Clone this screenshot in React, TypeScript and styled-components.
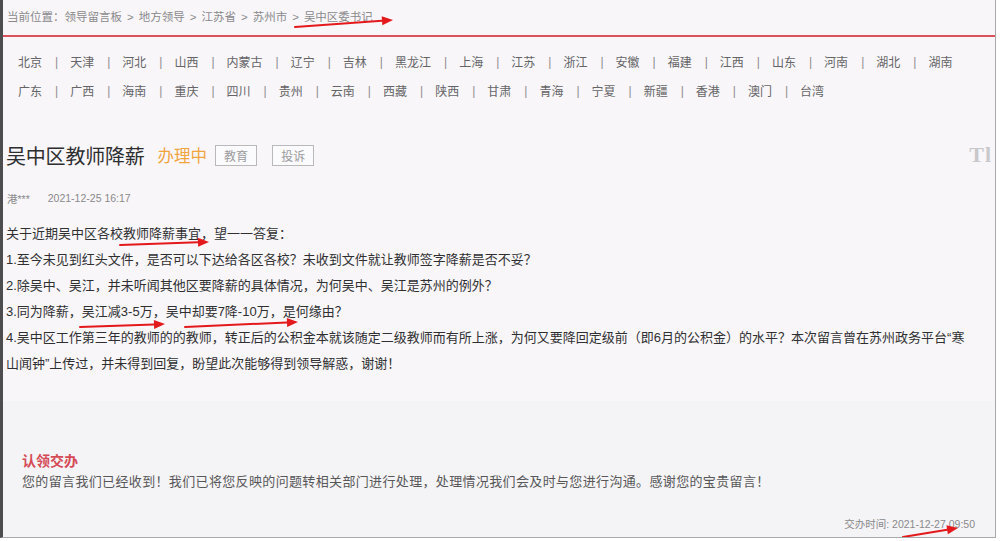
import React from "react";
import styled, { createGlobalStyle } from "styled-components";

const GlobalStyle = createGlobalStyle`
  html, body {
    margin: 0;
    padding: 0;
    background: #ffffff;
  }
  body {
    font-family: "Liberation Sans", "Noto Sans CJK SC", sans-serif;
  }
`;

const crumbs = ["领导留言板", "地方领导", "江苏省", "苏州市", "吴中区委书记"];

const provinceRows = [
  ["北京", "天津", "河北", "山西", "内蒙古", "辽宁", "吉林", "黑龙江", "上海", "江苏", "浙江", "安徽", "福建", "江西", "山东", "河南", "湖北", "湖南"],
  ["广东", "广西", "海南", "重庆", "四川", "贵州", "云南", "西藏", "陕西", "甘肃", "青海", "宁夏", "新疆", "香港", "澳门", "台湾"],
];

const bodyLines = [
  "关于近期吴中区各校教师降薪事宜，望一一答复：",
  "1.至今未见到红头文件，是否可以下达给各区各校？未收到文件就让教师签字降薪是否不妥？",
  "2.除吴中、吴江，并未听闻其他区要降薪的具体情况，为何吴中、吴江是苏州的例外？",
  "3.同为降薪，吴江减3-5万，吴中却要7降-10万，是何缘由？",
  "4.吴中区工作第三年的教师的的教师，转正后的公积金本就该随定二级教师而有所上涨，为何又要降回定级前（即6月的公积金）的水平？本次留言曾在苏州政务平台“寒",
  "山闻钟”上传过，并未得到回复，盼望此次能够得到领导解惑，谢谢！",
];

// red annotation arrows drawn over the screenshot
const arrows = [
  { x1: 295, y1: 27, x2: 393, y2: 20 },
  { x1: 120, y1: 245, x2: 209, y2: 242 },
  { x1: 80, y1: 327, x2: 165, y2: 324 },
  { x1: 185, y1: 327, x2: 298, y2: 322 },
  { x1: 903, y1: 537, x2: 958, y2: 528 },
];

const Arrow = ({ x1, y1, x2, y2 }: { x1: number; y1: number; x2: number; y2: number }) => {
  const a = Math.atan2(y2 - y1, x2 - x1);
  const len = 11;
  const half = 4.5;
  const bx = x2 - Math.cos(a) * len;
  const by = y2 - Math.sin(a) * len;
  const px = -Math.sin(a) * half;
  const py = Math.cos(a) * half;
  const pts = `${x2},${y2} ${bx + px},${by + py} ${bx - px},${by - py}`;
  return (
    <g>
      <line x1={x1} y1={y1} x2={bx} y2={by} stroke="#e3191c" strokeWidth={2} strokeLinecap="round" />
      <polygon points={pts} fill="#e3191c" />
    </g>
  );
};

export default function App() {
  return (
    <>
      <GlobalStyle />
      <Frame>
        <Breadcrumb>
          <span>当前位置：</span>
          {crumbs.map((c, i) => (
            <React.Fragment key={c}>
              {i > 0 && <CrumbSep>&gt;</CrumbSep>}
              <Crumb>{c}</Crumb>
            </React.Fragment>
          ))}
        </Breadcrumb>
        <RedRule />

        <ProvinceNav>
          {provinceRows.map((row, r) => (
            <ProvinceRow key={r}>
              {row.map((p, i) => (
                <React.Fragment key={p}>
                  {i > 0 && <NavSep>|</NavSep>}
                  <Province>{p}</Province>
                </React.Fragment>
              ))}
            </ProvinceRow>
          ))}
        </ProvinceNav>

        <TitleRow>
          <Title>吴中区教师降薪</Title>
          <Status>办理中</Status>
          <Tag>教育</Tag>
          <Tag $wide>投诉</Tag>
          <Corner>Tl</Corner>
        </TitleRow>

        <Meta>
          <span>港***</span>
          <span>2021-12-25 16:17</span>
        </Meta>

        <Body>
          {bodyLines.map((l, i) => (
            <BodyLine key={i}>{l}</BodyLine>
          ))}
        </Body>

        <Reply>
          <ReplyTitle>认领交办</ReplyTitle>
          <ReplyText>
            您的留言我们已经收到！我们已将您反映的问题转相关部门进行处理，处理情况我们会及时与您进行沟通。感谢您的宝贵留言！
          </ReplyText>
          <ReplyTime>交办时间: 2021-12-27 09:50</ReplyTime>
        </Reply>

        <Annotations width={1000} height={541} viewBox="0 0 1000 541">
          {arrows.map((a, i) => (
            <Arrow key={i} {...a} />
          ))}
        </Annotations>
      </Frame>
    </>
  );
}

const Frame = styled.div`
  position: relative;
  width: 996px;
  height: 538px;
  box-sizing: border-box;
  border-left: 3px solid #4d4d4f;
  border-right: 1px solid #a9a9ab;
  border-bottom: 1px solid #a9a9ab;
  background: #f8f6f9;
  display: flex;
  flex-direction: column;
  overflow: hidden;
`;

const Breadcrumb = styled.div`
  height: 35px;
  box-sizing: border-box;
  padding: 0 0 2px 4px;
  font-size: 11.5px;
  line-height: 16px;
  color: #8a8a8c;
  display: flex;
  align-items: center;
  align-self: flex-start;
`;

const Crumb = styled.span`
  white-space: nowrap;
`;

const CrumbSep = styled.span`
  margin: 0 5px;
`;

const RedRule = styled.div`
  height: 2px;
  background: #d9535c;
`;

const ProvinceNav = styled.div`
  padding: 10px 0 0 15px;
  display: flex;
  flex-direction: column;
`;

const ProvinceRow = styled.div`
  display: flex;
  align-items: center;
  height: 29px;
  font-size: 12px;
  color: #656567;
  white-space: nowrap;
`;

const Province = styled.span``;

const NavSep = styled.span`
  margin: 0 12px 0 13px;
  color: #8d8d8f;
  font-size: 12px;
`;

const TitleRow = styled.div`
  display: flex;
  align-items: center;
  height: 30px;
  margin-top: 35px;
  padding-left: 3px;
`;

const Title = styled.h1`
  margin: 0;
  font-family: "Noto Sans CJK SC", sans-serif;
  font-weight: 400;
  font-size: 20px;
  color: #2e2e30;
  letter-spacing: -0.2px;
`;

const Status = styled.span`
  margin-left: 13px;
  font-family: "Noto Sans CJK SC", sans-serif;
  font-size: 16.5px;
  color: #f1a53f;
`;

const Tag = styled.span<{ $wide?: boolean }>`
  margin-left: ${(p) => (p.$wide ? "15px" : "8px")};
  height: 19px;
  padding: 0 8px;
  display: inline-flex;
  align-items: center;
  border: 1px solid #b9b9bb;
  background: #fbfafc;
  font-size: 12px;
  color: #9a9a9c;
`;

const Corner = styled.span`
  margin-left: auto;
  margin-right: 3px;
  font-family: "Liberation Serif", serif;
  font-weight: 700;
  font-size: 22px;
  color: #c9c9cb;
  letter-spacing: 1px;
`;

const Meta = styled.div`
  margin-top: 18px;
  padding-left: 4px;
  height: 20px;
  display: flex;
  align-items: center;
  gap: 18px;
  font-size: 10.5px;
  color: #8a8a8c;
`;

const Body = styled.div`
  margin-top: 13px;
  padding-left: 3px;
  display: flex;
  flex-direction: column;
`;

const BodyLine = styled.p`
  margin: 0;
  height: 26px;
  line-height: 26px;
  font-size: 13px;
  color: #303032;
  white-space: nowrap;
`;

const Reply = styled.div`
  margin-top: 24px;
  flex: 1;
  padding: 49px 20px 0 19px;
  background: #f4f3f5;
  display: flex;
  flex-direction: column;
`;

const ReplyTitle = styled.div`
  height: 22px;
  line-height: 22px;
  font-size: 14px;
  font-weight: 700;
  color: #d44a55;
`;

const ReplyText = styled.div`
  height: 20px;
  line-height: 20px;
  font-size: 13px;
  letter-spacing: 0.35px;
  color: #58585a;
  white-space: nowrap;
`;

const ReplyTime = styled.div`
  margin-top: 24px;
  align-self: flex-end;
  font-size: 10.5px;
  color: #8a8a8c;
`;

const Annotations = styled.svg`
  position: absolute;
  left: -3px;
  top: 0;
  pointer-events: none;
`;
